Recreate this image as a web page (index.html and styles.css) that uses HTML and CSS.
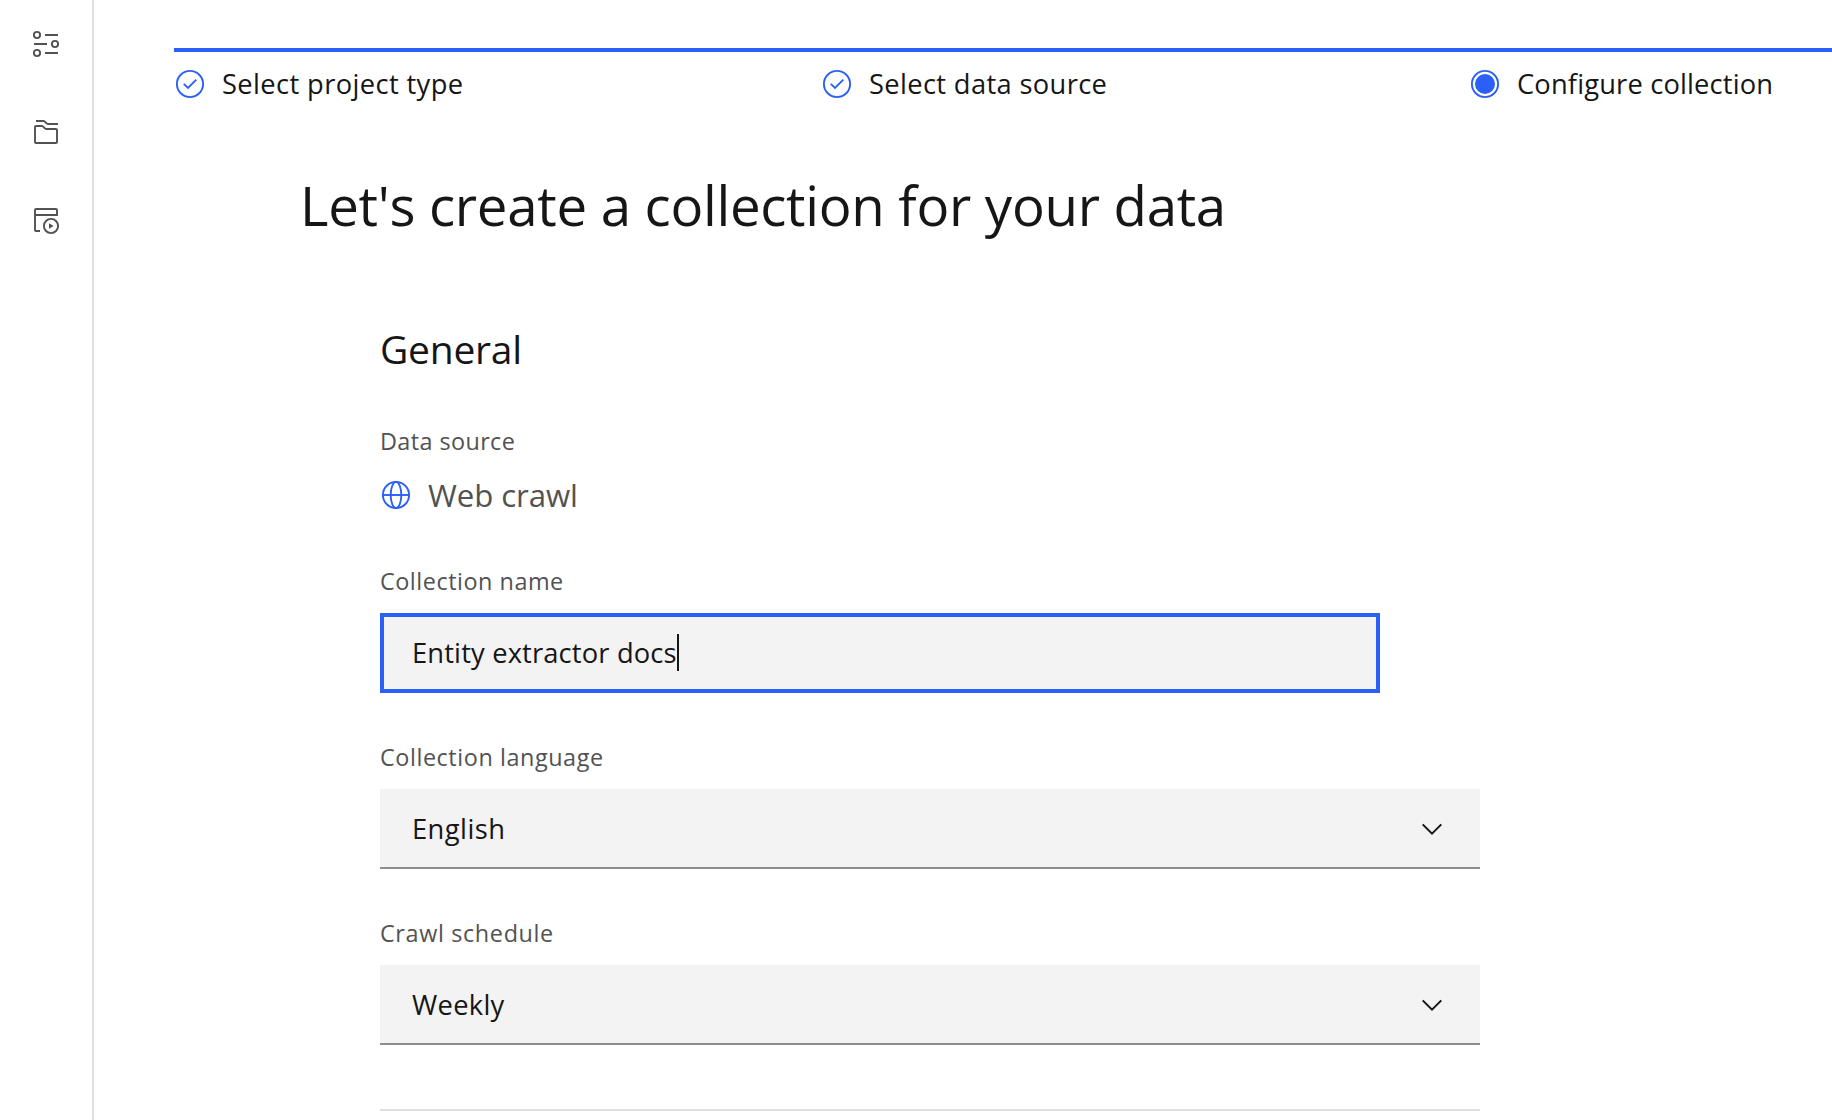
FILE: index.html
```html
<!DOCTYPE html>
<html lang="en">
<head>
<meta charset="utf-8">
<title>Configure collection</title>
<link rel="stylesheet" href="styles.css">
</head>
<body>
<div class="app">
  <nav class="sidebar">
    <svg class="icon" viewBox="0 0 32 32"><circle cx="7" cy="7" r="3.1"/><circle cx="25" cy="16" r="3.1"/><circle cx="7" cy="25" r="3.1"/><path d="M15 7H28M4 16H17M15 25H28"/></svg>
    <svg class="icon" viewBox="0 0 32 32"><path d="M6 5H13.2Q14.2 5 14.9 5.7L16.6 7.3Q17.3 8 18.3 8H28M6 10H11.5Q12.5 10 13.2 10.7L14.6 12.2Q15.3 13 16.3 13H26Q27 13 27 14V26Q27 27 26 27H6Q5 27 5 26V11Q5 10 6 10Z"/></svg>
    <svg class="icon" viewBox="0 0 32 32"><path d="M10 27H6Q5 27 5 26V6Q5 5 6 5H26Q27 5 27 6V12M5 11H27"/><circle cx="21" cy="22" r="7.1"/><path class="solid" d="M19 19.2V24.8L23.6 22Z"/></svg>
  </nav>
  <main class="main">
    <ol class="steps">
      <li class="step"><svg class="icon blue" viewBox="0 0 32 32"><circle cx="16" cy="16" r="13.1"/><path d="M9.8 15.8L14 20L22.3 11.7"/></svg><span class="t-project">Select project type</span></li>
      <li class="step"><svg class="icon blue" viewBox="0 0 32 32"><circle cx="16" cy="16" r="13.1"/><path d="M9.8 15.8L14 20L22.3 11.7"/></svg><span class="t-source">Select data source</span></li>
      <li class="step"><svg class="icon blue" viewBox="0 0 32 32"><circle cx="16" cy="16" r="13.1"/><circle class="solid" cx="16" cy="16" r="10"/></svg><span class="t-configure">Configure collection</span></li>
    </ol>
    <h1 class="title">Let's create a collection for your data</h1>
    <section class="form">
      <h2 class="section-title">General</h2>
      <div class="label t-ds">Data source</div>
      <div class="source"><svg class="icon blue" viewBox="0 0 32 32"><circle cx="16" cy="16" r="13.1"/><path d="M3 16H29"/><ellipse cx="16" cy="16" rx="5.3" ry="13.1"/></svg><span>Web crawl</span></div>
      <div class="label t-name">Collection name</div>
      <div class="input"><span>Entity extractor docs</span><i class="caret"></i></div>
      <div class="label t-lang">Collection language</div>
      <div class="select"><span class="t-english">English</span><svg class="icon dark" viewBox="0 0 32 32"><path d="M6.7 12.4L16 21.7L25.3 12.4"/></svg></div>
      <div class="label t-crawl">Crawl schedule</div>
      <div class="select"><span class="t-weekly">Weekly</span><svg class="icon dark" viewBox="0 0 32 32"><path d="M6.7 12.4L16 21.7L25.3 12.4"/></svg></div>
      <hr class="divider">
    </section>
  </main>
</div>
</body>
</html>
```
FILE: styles.css
```css
* { box-sizing: border-box; }
body {
  margin: 0;
  background: #fff;
  color: #161616;
  font-family: "Open Sans", "Noto Sans", sans-serif;
  font-size: 27.3px;
  overflow: hidden;
}
.app { display: flex; height: 1120px; overflow: hidden; }
.sidebar {
  flex: none;
  width: 94px;
  padding: 28px 0 0 30px;
  border-right: 2px solid #e0e0e0;
  display: flex;
  flex-direction: column;
  gap: 56px;
}
.icon {
  flex: none;
  width: 32px;
  height: 32px;
  fill: none;
  stroke: #525252;
  stroke-width: 1.9;
}
.icon .solid { fill: #525252; stroke: none; }
.icon.blue { stroke: #2a60f8; }
.icon.blue .solid { fill: #2a60f8; }
.icon.dark { stroke: #161616; stroke-width: 2; }
.main { flex: 1; min-width: 0; padding: 48px 0 0 80px; }
.steps {
  list-style: none;
  margin: 0;
  padding: 16px 0 0;
  border-top: 4px solid #2a60f8;
  display: grid;
  grid-template-columns: 647px 648px 1fr;
}
.step {
  display: flex;
  align-items: center;
  gap: 16px;
  height: 32px;
  white-space: nowrap;
}
.step span { line-height: 32px; }
.title {
  margin: 73px 0 0 126px;
  font-size: 54.6px;
  font-weight: 400;
  line-height: 64px;
  letter-spacing: -0.3px;
}
.form { width: 1100px; margin: 87px 0 0 206px; }
.section-title {
  margin: 0 0 51px;
  font-size: 39px;
  font-weight: 400;
  line-height: 50px;
  letter-spacing: -0.25px;
}
.label {
  margin-bottom: 16px;
  color: #525252;
  font-size: 23.4px;
  line-height: 32px;
}
.source {
  display: flex;
  align-items: center;
  gap: 16px;
  height: 40px;
  margin: 18px 0 50px;
  color: #525252;
  font-size: 31.2px;
  line-height: 40px;
  letter-spacing: -0.084px;
}
.input {
  display: flex;
  align-items: center;
  width: 1000px;
  height: 80px;
  margin-bottom: 48px;
  padding: 0 28px 2px;
  border: 4px solid #2a60f8;
  background: #f3f3f3;
  letter-spacing: 0.16px;
}
.caret { width: 2px; height: 37px; background: #161616; }
.select {
  display: flex;
  align-items: center;
  justify-content: space-between;
  height: 80px;
  margin-bottom: 48px;
  padding: 0 32px;
  border-bottom: 2px solid #8d8d8d;
  background: #f3f3f3;
}
.divider { height: 2px; margin: 64px 0 0; border: 0; background: #e0e0e0; }
.t-project { letter-spacing: 0.38px; }
.t-source { letter-spacing: 0.35px; }
.t-configure { letter-spacing: 0.16px; }
.t-ds { letter-spacing: 0.4px; }
.t-name { letter-spacing: 0.53px; }
.t-lang { letter-spacing: 0.57px; }
.t-crawl { letter-spacing: 0.64px; }
.t-english { letter-spacing: 0.45px; }
.t-weekly { letter-spacing: 0.3px; }
```
